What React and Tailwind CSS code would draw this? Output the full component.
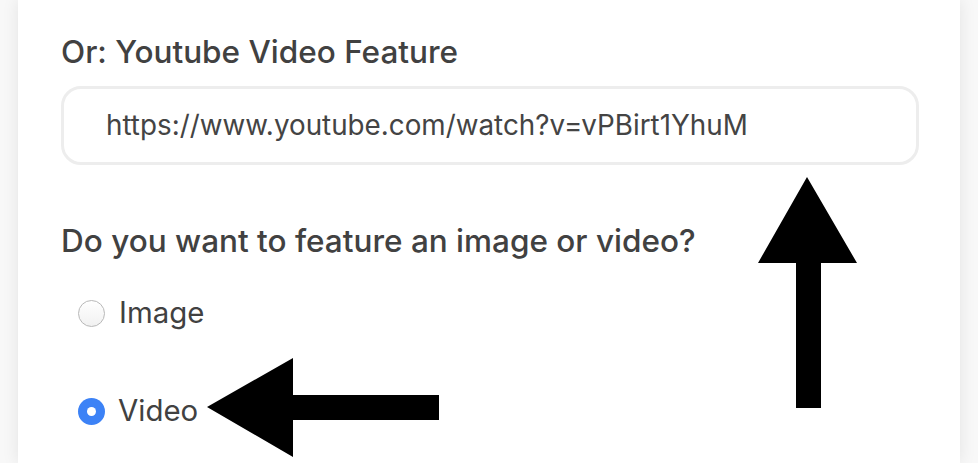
export default function App() {
    return (
        <div className="relative h-[463px] w-[978px] overflow-hidden bg-[#f8f8f8] font-['Inter',sans-serif] text-[#414141]">
            <div className="mx-[18px] h-full bg-white pl-[43px] pr-[41px] pt-[32px] shadow-[0_0_16px_rgba(0,0,0,0.09)]">
                <h3 className="text-[31.5px] leading-[40px] font-medium">Or: Youtube Video Feature</h3>
                <div className="mt-[14px] flex h-[79px] items-center rounded-[20px] border-[3px] border-[#ededed] pl-[42px]">
                    <span className="text-[27.8px] text-[#444]">https://www.youtube.com/watch?v=vPBirt1YhuM</span>
                </div>
                <h3 className="mt-[56px] text-[31.5px] leading-[40px] font-medium">Do you want to feature an image or video?</h3>
                <div className="mt-[38px] flex flex-col gap-[70px] pl-[17px]">
                    <label className="flex items-center gap-[14px]">
                        <span className="h-[27px] w-[27px] rounded-full border border-[#b8b8b8] bg-gradient-to-b from-white to-[#f1f1f1]"></span>
                        <span className="text-[29.4px] leading-[28px]">Image</span>
                    </label>
                    <label className="flex items-center gap-[13px]">
                        <span className="flex h-[27px] w-[27px] items-center justify-center rounded-full bg-[#3c82f6]">
                            <span className="h-[9px] w-[9px] rounded-full bg-white"></span>
                        </span>
                        <span className="text-[29.4px] leading-[28px]">Video</span>
                    </label>
                </div>
            </div>

            {/* annotation arrows */}
            <svg className="absolute left-0 top-0" width="978" height="463" viewBox="0 0 978 463">
                <polygon fill="#000" points="807,177 857,263 821,263 821,408 796,408 796,263 758,263" />
                <polygon fill="#000" points="207,407 293,358 293,395 439,395 439,420 293,420 293,457" />
            </svg>
        </div>
    );
}
